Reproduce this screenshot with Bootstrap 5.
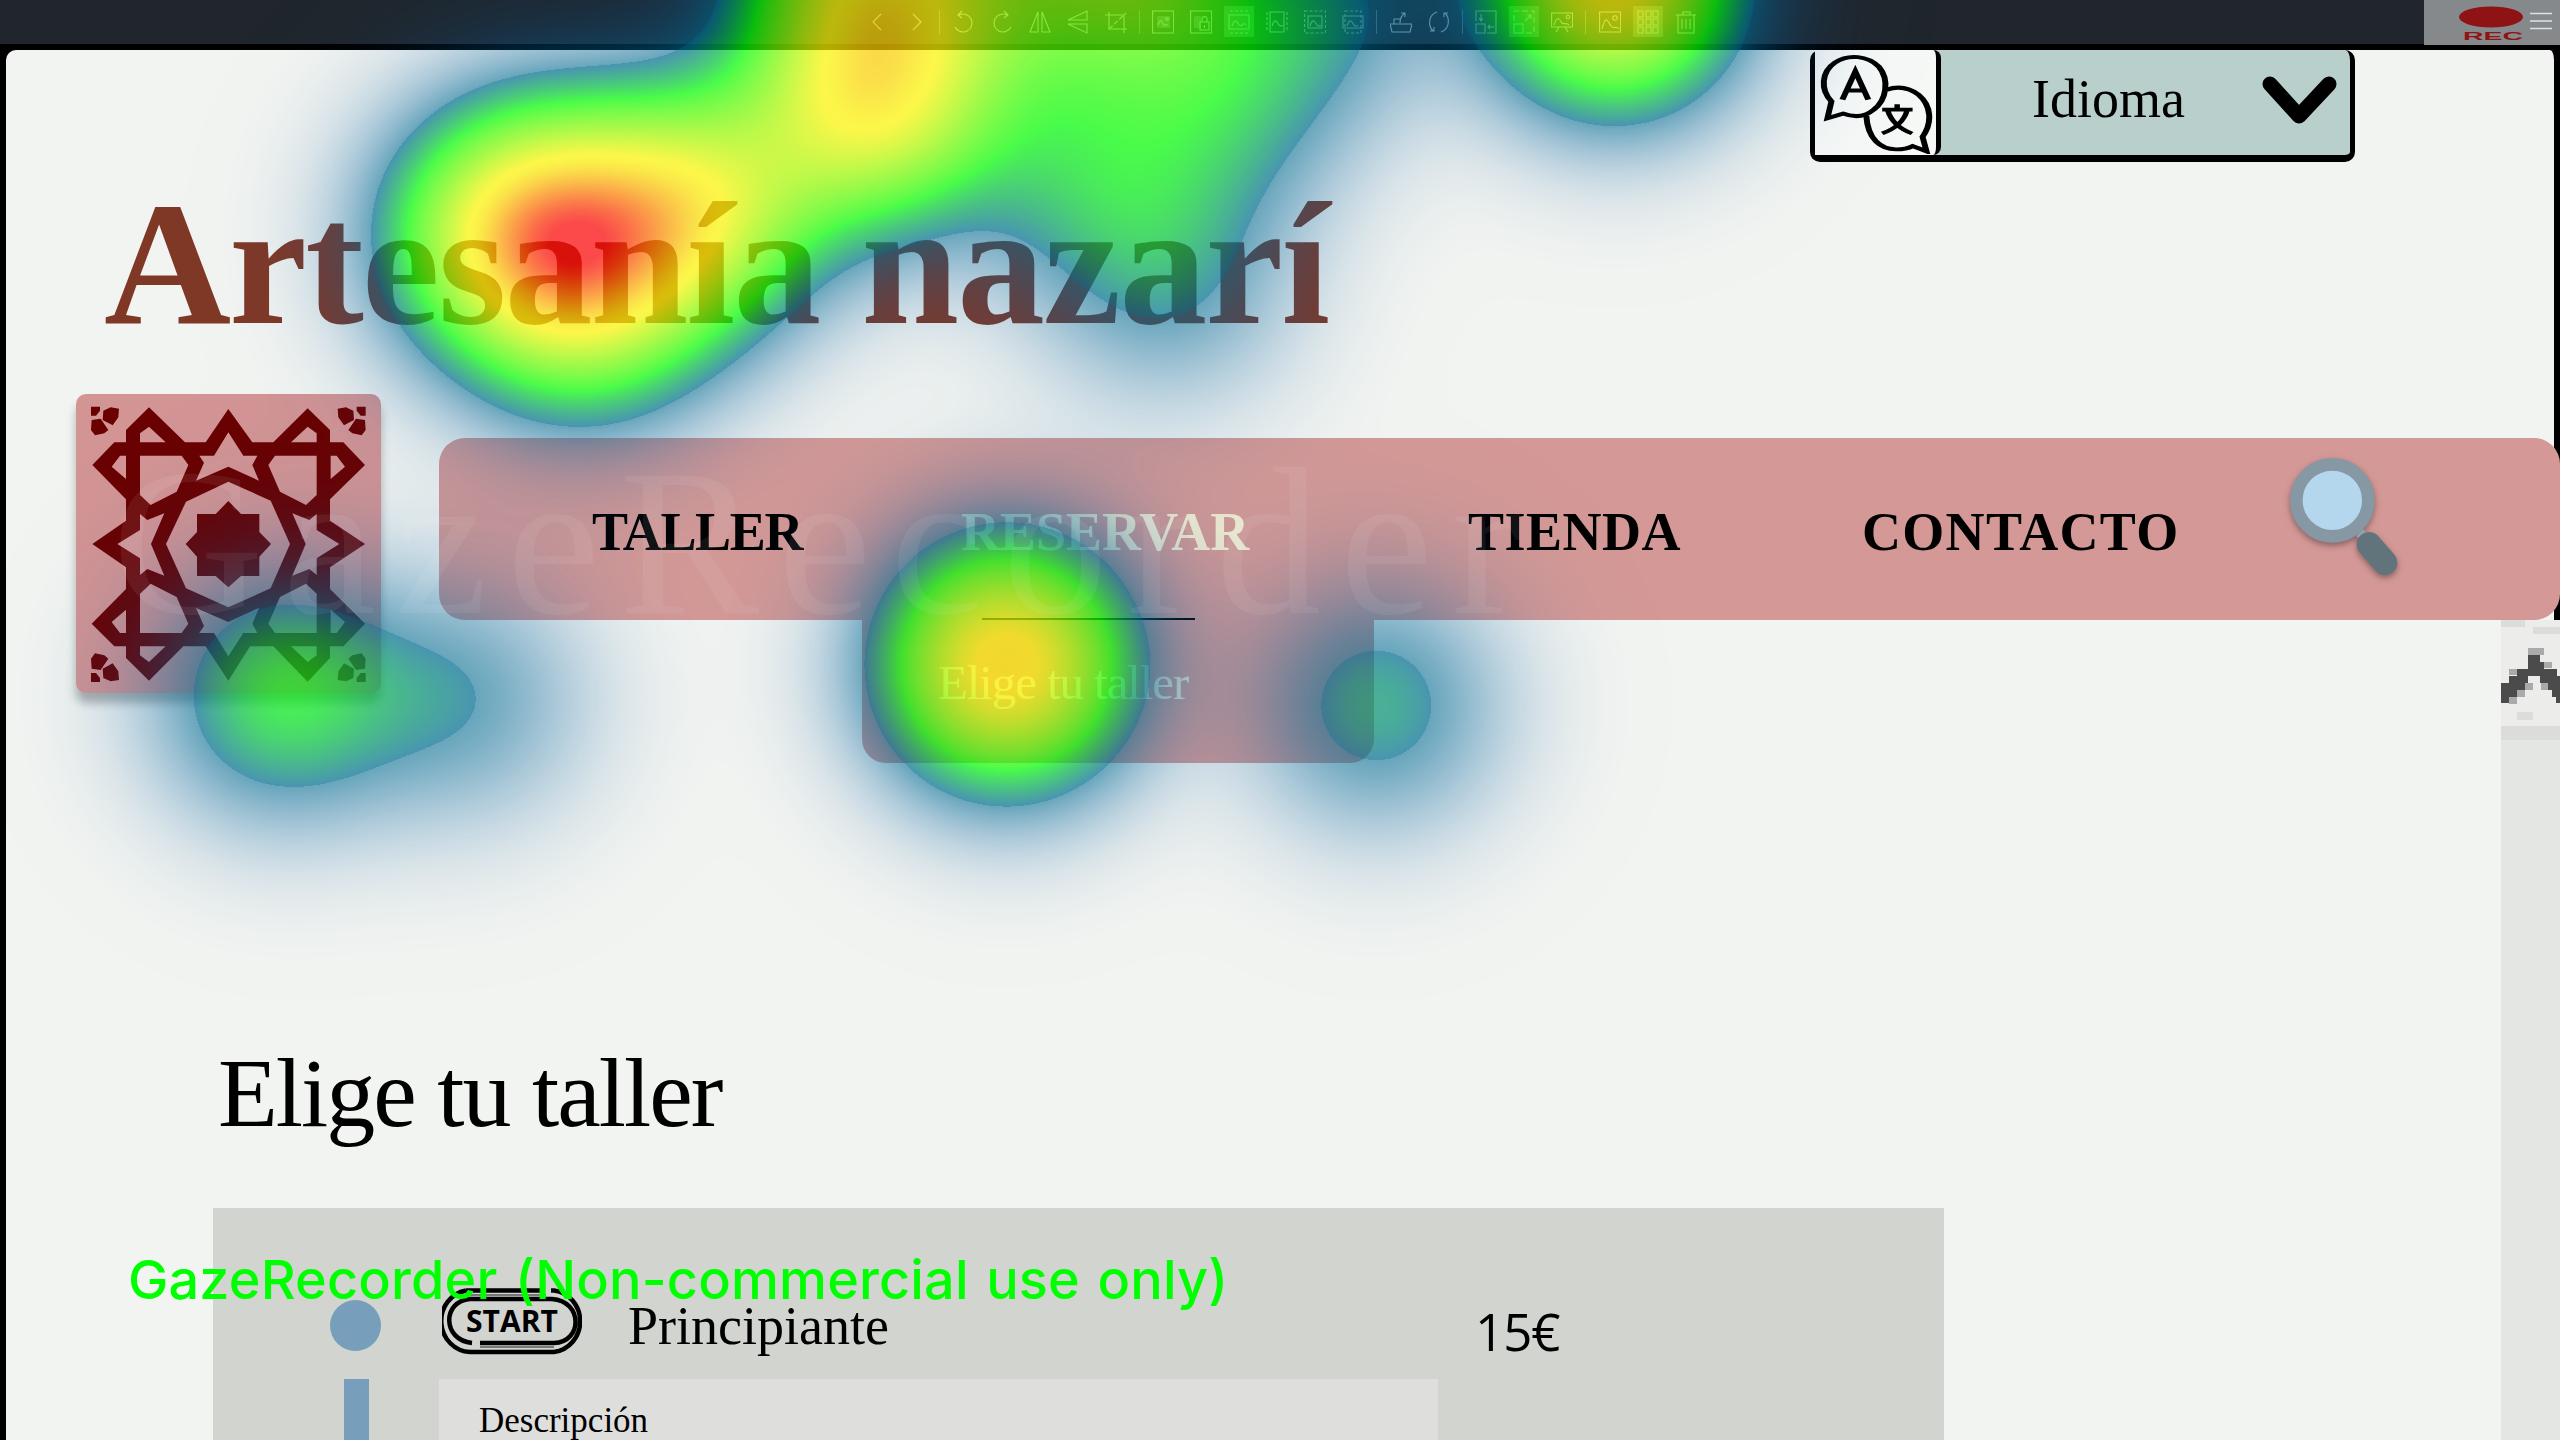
<!DOCTYPE html>
<html lang="es">
<head>
<meta charset="utf-8">
<title>Artesanía nazarí</title>
<link rel="stylesheet" href="https://cdn.jsdelivr.net/npm/bootstrap@5.3.0/dist/css/bootstrap.min.css">
<style>
body{width:2560px;height:1440px;background:#000;color:#000;font-family:"Liberation Serif",serif;line-height:1}
.toolbar{height:44px;background:#20262c;padding-left:859px}
.tool{width:38px;height:44px}
.tool svg{width:22px;height:24px;fill:none;stroke:#b4bcbf;stroke-width:1.1}
.tool-on{background:rgba(255,255,255,.24);width:30px;height:31px;margin:6px 4px 0}
.sep{width:9.500px;height:24px;margin-top:10px}
.sep i{display:block;width:1px;height:24px;margin:auto;background:#697174}
.rec{width:136px;height:45px;background:#85898b}
.top-part{height:570px;margin:6px 0 0 6px;background:#f2f4f1;border-right:6px solid #000;border-radius:10px 10px 0 0;z-index:2}
.lang{width:545px;height:112px;margin-right:199px;border:5px solid #000;border-top:0;border-bottom-width:7px;border-radius:10px;background:#b9cfcb}
.lang-ico{width:126px;background:#f6f8f6;border-right:5px solid #000;border-radius:0 8px 8px 0}
.lang-txt{font-size:54px;margin-left:91px;margin-top:22px}
.brand{font-size:176px;letter-spacing:-2px;color:#803826;margin:14px 0 0 98px;font-weight:700;line-height:1}
.logo-tile{width:305px;height:299px;margin:42px 0 0 70px;border-radius:10px;background:#d39494;box-shadow:0 10px 10px rgba(0,0,0,.28)}
.menu-bar{width:2121px;height:182px;margin:86px -6px 0 58px;border-radius:26px;background:#d49996;flex:none}
.menu-bar a{color:#000;text-decoration:none;font-weight:700;font-size:54px;line-height:54px;padding-top:5px;white-space:nowrap}
.menu-bar .w-taller{width:369px;margin-left:153px;letter-spacing:-1.3px}
.menu-bar .w-reservar{width:507px;color:#f3ecd0}
.menu-bar .w-tienda{width:394px;letter-spacing:.5px}
.menu-bar .w-contacto{width:426px;letter-spacing:1.3px}
.lens{margin-top:-22px;filter:drop-shadow(0 3px 3px rgba(60,40,50,.5))}
.submenu{top:182px;left:423px;width:512px;height:143px;background:#d49996;border-radius:0 0 24px 24px}
.submenu:before{content:"";position:absolute;left:120px;top:-2px;width:213px;height:2px;background:#000}
.submenu span{font-size:49px;letter-spacing:-1.1px;color:#efe9cf;margin:38px 0 0 76px}
.low-part{height:820px;margin-left:6px;background:#f2f4f1}
.sect{font-size:98px;letter-spacing:-2px;margin:424px 0 0 212px;line-height:1;font-weight:400}
.panel{width:1731px;height:232px;margin:66px 0 0 207px;background:#d2d4d0;padding-top:80px}
.lvl-row{height:67px}
.dot{width:51px;height:51px;margin:12px 0 0 117px;background:#779fbc}
.start-ico{margin:0 0 0 61px}
.track{width:25px;margin-left:131px;background:#779fbc}
.level{font-size:54px;margin:11px 0 0 46px;width:847px}
.price{font-family:"Open Sans",sans-serif;font-size:51px;letter-spacing:-1px;margin-top:18px}
.desc{width:999px;height:61px;margin-left:70px;background:#dededc;font-size:35px;padding:24px 0 0 40px}
.scroll{width:59px;background:#e4e6e3}
.heat{left:0;top:0;z-index:10;pointer-events:none}
.wm{left:112px;top:437px;font-size:210px;letter-spacing:19px;color:rgba(255,255,255,.065);z-index:11;white-space:nowrap}
.notice{left:128px;top:1250px;font:500 54px/1.1 Inter,sans-serif;letter-spacing:.15px;word-spacing:3px;color:#0f0;z-index:12;white-space:nowrap}
</style>
<script src="https://cdn.jsdelivr.net/npm/bootstrap@5.3.0/dist/js/bootstrap.bundle.min.js"></script>
</head>
<body class="position-relative overflow-hidden">
<div class="toolbar d-flex">
<div class="tool d-flex align-items-center justify-content-center"><svg viewBox="0 0 22 24"><path d="M14 4L6 12l8 8"/></svg></div>
<div class="tool d-flex align-items-center justify-content-center"><svg viewBox="0 0 22 24"><path d="M8 4l8 8-8 8"/></svg></div>
<div class="sep"><i></i></div>
<div class="tool d-flex align-items-center justify-content-center"><svg viewBox="0 0 22 24"><path d="M2 17a9 9 0 1 0 4-12M9 1L5 5l4 3"/></svg></div>
<div class="tool d-flex align-items-center justify-content-center"><svg viewBox="0 0 22 24"><path d="M20 17a9 9 0 1 1-4-12M13 1l4 4-4 3"/></svg></div>
<div class="tool d-flex align-items-center justify-content-center"><svg viewBox="0 0 22 24"><path d="M9 2v20H1zM13 2v20h8z"/></svg></div>
<div class="tool d-flex align-items-center justify-content-center"><svg viewBox="0 0 22 24"><path d="M20 1v9H1zM20 23v-9H1z"/></svg></div>
<div class="tool d-flex align-items-center justify-content-center"><svg viewBox="0 0 22 24"><path d="M0 5h19v18M4 2v17h18"/><path d="M4 19L21 3" stroke-dasharray="5 2"/></svg></div>
<div class="sep"><i></i></div>
<div class="tool d-flex align-items-center justify-content-center"><svg viewBox="0 0 22 24"><path d="M5 6h13v12H5z" fill="#556" stroke="none"/><path d="M.6 1h21v22h-21zM6 15c2-7 4-4 5-1s3 0 5 1"/><circle cx="15" cy="9" r="1.3"/></svg></div>
<div class="tool d-flex align-items-center justify-content-center"><svg viewBox="0 0 22 24"><path d="M4 6h7v12H4z" fill="#556" stroke="none"/><path d="M.6 1h21v22h-21zM10 12h9v8h-9zM12 12V9a2.500 2.500 0 0 1 5 0v3M14.500 15v3"/></svg></div>
<div class="tool tool-on d-flex align-items-center justify-content-center"><svg viewBox="0 0 22 24"><path d="M1 5h20v14H1zM4 16c3-9 5-4 7-1s4-4 7 0"/><path d="M2 1h18M2 23h18" stroke-dasharray="3 2"/></svg></div>
<div class="tool d-flex align-items-center justify-content-center"><svg viewBox="0 0 22 24"><path d="M4 2h14v20H4zM6 16c3-9 5-4 7-1s2-1 4 1"/><path d="M1 2v20M21 2v20" stroke-dasharray="3 2"/></svg></div>
<div class="tool d-flex align-items-center justify-content-center"><svg viewBox="0 0 22 24"><path d="M.6 1h21v22h-21z" stroke-dasharray="3 2"/><path d="M4 6h14v12H4zM6 16c3-9 5-4 7-1s2-1 4 1"/></svg></div>
<div class="tool d-flex align-items-center justify-content-center"><svg viewBox="0 0 22 24"><path d="M3 1h16v22H3z" stroke-dasharray="3 2"/><path d="M1 6h20v12H1zM5 16c3-9 5-4 7-1s2-1 4 1"/></svg></div>
<div class="sep"><i></i></div>
<div class="tool d-flex align-items-center justify-content-center"><svg viewBox="0 0 22 24"><path d="M0 14h22l-2 8H2zM4 14V9h6M10 13c0-6 2-8 5-10M11 3h4v4"/></svg></div>
<div class="tool d-flex align-items-center justify-content-center"><svg viewBox="0 0 22 24"><path d="M9 2C0 5 0 16 5 21M2 21h4v-4M13 22c9-3 9-14 4-19M20 3h-4v4"/></svg></div>
<div class="sep"><i></i></div>
<div class="tool d-flex align-items-center justify-content-center"><svg viewBox="0 0 22 24"><path d="M1 11V1h20v22h-9M1 14h9v9H1zM6 4v6M4 8l2 3 2-3M19 17h-6M15 15l-2 2 2 2"/></svg></div>
<div class="tool tool-on d-flex align-items-center justify-content-center"><svg viewBox="0 0 22 24"><path d="M1 14h9v9H1z"/><path d="M1 11V1h20v22h-9" stroke-dasharray="6 3"/><path d="M12 11l6-6M14 5h4v4"/></svg></div>
<div class="tool d-flex align-items-center justify-content-center"><svg viewBox="0 0 22 24"><path d="M.6 3h21v14h-21zM3 15c4-12 6-4 8-2s4-1 7 2M8 17l-3 5M14 17l3 5"/><circle cx="17" cy="7" r="1.800"/></svg></div>
<div class="sep"><i></i></div>
<div class="tool d-flex align-items-center justify-content-center"><svg viewBox="0 0 22 24"><path d="M.6 2h21v20h-21zM3 19c4-16 6-7 9-3s5-1 8 3"/><circle cx="16" cy="8" r="2.200"/></svg></div>
<div class="tool tool-on d-flex align-items-center justify-content-center"><svg viewBox="0 0 22 24"><path d="M1 1h5v6H1zM9 1h5v6H9zM16 1h5v6h-5zM1 9h5v6H1zM9 9h5v6H9zM16 9h5v6h-5zM1 17h5v6H1zM9 17h5v6H9zM16 17h5v6h-5z"/></svg></div>
<div class="tool d-flex align-items-center justify-content-center"><svg viewBox="0 0 22 24"><path d="M1 5h20M8 5V2h7v3M3 5v18h16V5M7 9v10M11 9v10M15 9v10"/></svg></div>
<div class="rec ms-auto"><svg width="136" height="45"><ellipse cx="67" cy="17" rx="32" ry="10.500" fill="#8f1215"/><text x="39" y="40" font-family="Liberation Sans, sans-serif" font-weight="700" font-size="11.500" textLength="60" lengthAdjust="spacingAndGlyphs" fill="#8f1215">REC</text><path d="M106 13.500h22M106 21h22M106 28.500h22" stroke="#dfe2e3" stroke-width="1.500"/></svg></div>
</div>

<div class="top-part position-relative">
<div class="d-flex justify-content-end"><div class="lang d-flex">
<div class="lang-ico"><svg width="121" height="104" viewBox="72 150 243 314" preserveAspectRatio="none" fill="none" stroke="#000" stroke-width="12"><path d="M175 348C178 420 204 450 235 450Q255 450 268 440L296 456 288 412C308 370 306 318 280 285Q250 252 216 270" /><path d="M105 305C82 270 85 215 112 188C140 160 178 168 200 200C222 240 216 300 190 330Q165 362 128 342L97 356Z"/><path d="M127 300L153 215 179 300M137 272H169"/><path d="M207 330H268M237 314V330M218 332Q228 380 267 402M257 332Q248 380 207 402" stroke-width="11"/></svg></div>
<div class="lang-txt">Idioma</div>
<svg class="ms-auto" width="94" height="100"><path d="M14 34L43 66 73 34" fill="none" stroke="#000" stroke-width="15" stroke-linecap="round" stroke-linejoin="round"/></svg>
</div></div>
<h1 class="brand">Artesanía nazarí</h1>
<div class="d-flex">
<div class="logo-tile flex-shrink-0"><svg width="305" height="299" viewBox="48 72 915 897">
<path fill="#6a0000" d="M505 117L577 217H640L743 115 810 180V217H850L915 285 810 388V452L915 522 810 592V657L915 761 850 829H810V864L743 935 640 829H570L505 932 437 829H370L267 932 198 864V829H163L95 761 198 657V592L97 522 198 452V388L97 285 163 217H198V180L267 112 375 217H437Z"/>
<g fill="#d39494"><g id="qd"><path d="M267 170L240 190V217H317ZM155 290L180 257H198V327ZM240 257H365L385 285 350 365 272 405 240 375Z"/></g>
<use href="#qd" transform="translate(1010) scale(-1 1)"/><use href="#qd" transform="translate(0 1046) scale(1 -1)"/><use href="#qd" transform="translate(1010 1046) scale(-1 -1)"/>
<path id="st" d="M505 187L550 257H592L577 285 597 332 505 290 408 332 432 278 418 257H462Z"/><use href="#st" transform="translate(0 1046) scale(1 -1)"/>
<path id="sl" d="M172 522L240 480V432L262 450 313 430 273 522 313 617 262 597 240 615V565Z"/><use href="#sl" transform="translate(1010) scale(-1 1)"/>
<path d="M505 335L632 392 690 522 632 655 505 712 378 655 318 522 378 395Z"/></g>
<g fill="#6a0000"><path d="M411 432H467L505 393 543 432H598V486L633 522 598 560V618H543L505 652 467 618H411V560L377 522 411 486Z"/>
<path id="cn" d="M93 110H120V122L108 137H93ZM130 122L152 112 177 116 175 142 158 166 128 150ZM95 150L122 146 145 180 133 190 105 196 93 180Z"/><use href="#cn" transform="translate(1010) scale(-1 1)"/><use href="#cn" transform="translate(0 1046) scale(1 -1)"/><use href="#cn" transform="translate(1010 1046) scale(-1 -1)"/></g></svg></div>
<nav class="menu-bar position-relative d-flex align-items-center">
<a class="w-taller" href="#">TALLER</a><a class="w-reservar" href="#">RESERVAR</a><a class="w-tienda" href="#">TIENDA</a><a class="w-contacto" href="#">CONTACTO</a>
<svg class="lens" width="115" height="125" viewBox="265 105 345 375"><path d="M470 345l20-22 16 18-20 22z" fill="#90a4ae"/><circle cx="398" cy="238" r="108" fill="#b4d7ed" stroke="#8698a4" stroke-width="38"/><path d="M508 370L556 425" stroke="#61747c" stroke-width="74" stroke-linecap="round"/></svg>
<div class="submenu position-absolute d-flex"><span>Elige tu taller</span></div>
</nav>
</div>
</div>

<div class="low-part d-flex">
<main class="flex-grow-1">
<h2 class="sect">Elige tu taller</h2>
<div class="panel">
<div class="lvl-row d-flex align-items-start"><div class="dot rounded-circle"></div>
<svg class="start-ico" width="140" height="67" fill="none" stroke="#000" stroke-width="4.500"><path d="M24 2.500H102M109 2.500H112A30 31 0 0 1 112 64H28A30 31 0 0 1 24 2.500M30 55C0 52 0 13 28 11H110C141 13 141 54 112 55H38"/><path d="M26 7H104M38 59H112" stroke="#777" stroke-width="2"/><text x="24" y="44" font-family="Open Sans, sans-serif" font-weight="700" font-size="31" textLength="92" lengthAdjust="spacingAndGlyphs" fill="#000" stroke="none">START</text></svg>
<div class="level">Principiante</div><div class="price">15€</div></div>
<div class="d-flex mt-4"><div class="track"></div><div class="desc">Descripción</div></div>
</div>
</main>
<div class="scroll"><svg width="59" height="120" shape-rendering="crispEdges"><path fill="#ecedeb" d="M0 0h59v120H0z"/><path fill="#dcdddb" d="M0 0h24v7H0zM32 7h27v7H32zM16 92h16v8H16zM0 106h59v14H0z"/><path fill="#aaa" d="M27 28h16v7H27zM8 49h8v6H8zM43 42h8v6h-8zM24 63h8v7h-8zM16 70h8v7h-8zM8 77h8v7H8zM40 63h7v7h-7z"/><path fill="#4a4b4a" d="M27 35h12v21H27zM39 42h4v14h-4zM16 49h40v7H16zM8 56h19v7H8zM39 56h20v7H39zM0 63h24v7H0zM47 63h12v7H47zM0 70h16v7H0zM51 70h8v7h-8zM0 77h8v6H0zM55 77h4v6h-4z"/></svg></div>
</div>

<canvas class="heat position-absolute" width="2560" height="1100"></canvas>
<div class="wm position-absolute">GazeRecorder</div>
<div class="notice position-absolute">GazeRecorder (Non-commercial use only)</div>
<script>
// Gaze fixations: x, y, weight
const fixations=[[586,303,.389],[495,232,.413],[567,208,.304],[697,209,.332],[857,-50,.42],[873,103,.575],[698,209,.165],[987,-22,.227],[1081,171,.179],[1134,-41,.385],[1223,107,.175],[1169,279,.161],[1614,-15,.68],[280,695,.297],[466,699,.158],[1326,3,.156],[1006,664,.7],[1376,705,.22]];
const S=14858,W=2560,H=1100,cx=document.querySelector('.heat').getContext('2d'),im=cx.createImageData(W,H),V=new Float32Array(W*H);
for(const [px,py,w] of fixations){
  const ex=[];for(let x=0;x<W;x++)ex.push(Math.exp(-((x-px)**2)/S));
  for(let y=0;y<H;y++){const ey=w*Math.exp(-((y-py)**2)/S);if(ey<1e-4)continue;for(let x=0;x<W;x++)V[y*W+x]+=ex[x]*ey}
}
// Blue fades out below the threshold, then blue > green > yellow > red
for(let i=0;i<V.length;i++){
  const v=V[i],k=i*4;let r=0,g,b=0,a=.7;
  if(v<.18){g=.34+.08*v/.18;b=1-g;a=.57*v/.18}
  else if(v<.333){g=.42+.58*(v-.18)/.153;b=1-g}
  else if(v<.667){r=((v-.333)*3)**.85;g=1-.03*r}
  else{r=1;g=Math.max(0,.97-(Math.min(1,(v-.667)*3))**1.6)}
  im.data[k]=r*255;im.data[k+1]=g*255;im.data[k+2]=b*255;im.data[k+3]=a*255;
}
cx.putImageData(im,0,0);
</script>
</body>
</html>
